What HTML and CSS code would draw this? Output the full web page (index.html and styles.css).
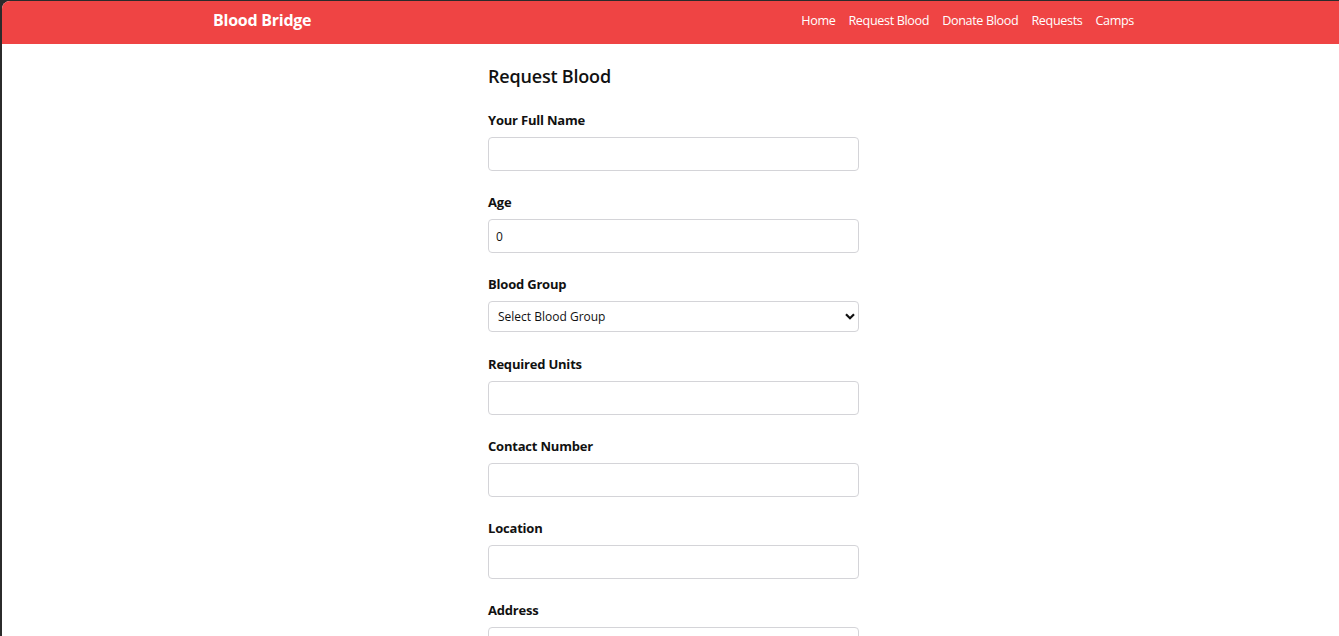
FILE: index.html
```html
<!DOCTYPE html>
<html lang="en">
<head>
<meta charset="utf-8">
<title>Blood Bridge</title>
<link rel="stylesheet" href="styles.css">
</head>
<body>
<div class="frame">
  <header class="navbar">
    <div class="nav-inner">
      <a class="brand" href="#">Blood Bridge</a>
      <nav class="links">
        <a href="#">Home</a>
        <a href="#">Request Blood</a>
        <a href="#">Donate Blood</a>
        <a href="#">Requests</a>
        <a href="#">Camps</a>
      </nav>
    </div>
  </header>
  <main class="content">
    <form class="form">
      <h2 class="title">Request Blood</h2>
      <div class="group">
        <label class="label">Your Full Name</label>
        <input class="field" type="text">
      </div>
      <div class="group">
        <label class="label">Age</label>
        <input class="field" type="number" value="0">
      </div>
      <div class="group group-select">
        <label class="label">Blood Group</label>
        <div class="select-wrap">
          <select class="field select">
            <option>Select Blood Group</option>
            <option>A+</option>
            <option>A-</option>
            <option>B+</option>
            <option>B-</option>
            <option>AB+</option>
            <option>AB-</option>
            <option>O+</option>
            <option>O-</option>
          </select>
          <svg class="chev" width="10" height="7" viewBox="0 0 10 7"><path d="M1 1.2 L5 5.2 L9 1.2" fill="none" stroke="#111" stroke-width="2.2"/></svg>
        </div>
      </div>
      <div class="group">
        <label class="label">Required Units</label>
        <input class="field" type="text">
      </div>
      <div class="group">
        <label class="label">Contact Number</label>
        <input class="field" type="text">
      </div>
      <div class="group">
        <label class="label">Location</label>
        <input class="field" type="text">
      </div>
      <div class="group">
        <label class="label">Address</label>
        <input class="field" type="text">
      </div>
    </form>
  </main>
</div>
</body>
</html>
```
FILE: styles.css
```css
* { box-sizing: border-box; }
html, body {
  margin: 0;
  height: 100%;
  background: #2b2b2b;
  overflow: hidden;
}
body {
  font-family: "Open Sans", "Noto Sans", sans-serif;
  color: #111;
}
.frame {
  margin: 1px 0 0 2px;
  height: calc(100% - 1px);
  background: #fff;
  border-top-left-radius: 8px;
  overflow: hidden;
}
.navbar {
  background: #ef4444;
  height: 43px;
}
.nav-inner {
  width: 921px;
  margin: 0 auto;
  position: relative;
  left: 3px;
  height: 100%;
  padding-bottom: 5px;
  display: flex;
  align-items: center;
  justify-content: space-between;
}
.brand {
  color: #fff;
  text-decoration: none;
  font-weight: 700;
  font-size: 16px;
  letter-spacing: -0.25px;
}
.links {
  display: flex;
  gap: 13px;
  padding-top: 1px;
}
.links a {
  color: #fff;
  text-decoration: none;
  font-size: 12.6px;
  letter-spacing: -0.35px;
}
.content {
  display: flex;
  justify-content: center;
  padding-left: 6px;
}
.form {
  width: 371px;
  padding-top: 20px;
}
.title {
  margin: 0 0 23px;
  font-size: 18px;
  font-weight: 600;
  line-height: 24px;
  letter-spacing: -0.2px;
}
.group {
  margin-bottom: 22px;
}
.group-select {
  margin-bottom: 22.5px;
}
.label {
  display: block;
  font-size: 13px;
  font-weight: 700;
  line-height: 18px;
  margin-bottom: 8px;
  letter-spacing: -0.2px;
}
.field {
  display: block;
  width: 100%;
  height: 34px;
  border: 1px solid #d4d4d8;
  border-radius: 4px;
  padding: 0 7px;
  font-family: inherit;
  font-size: 12px;
  color: #111;
  background: #fff;
  outline: none;
}
.field::-webkit-inner-spin-button { -webkit-appearance: none; }
.select-wrap { position: relative; }
.select {
  height: 31px;
  -webkit-appearance: none;
  appearance: none;
  padding-left: 9px;
}
.chev {
  position: absolute;
  right: 4px;
  top: 12px;
  pointer-events: none;
}
```
